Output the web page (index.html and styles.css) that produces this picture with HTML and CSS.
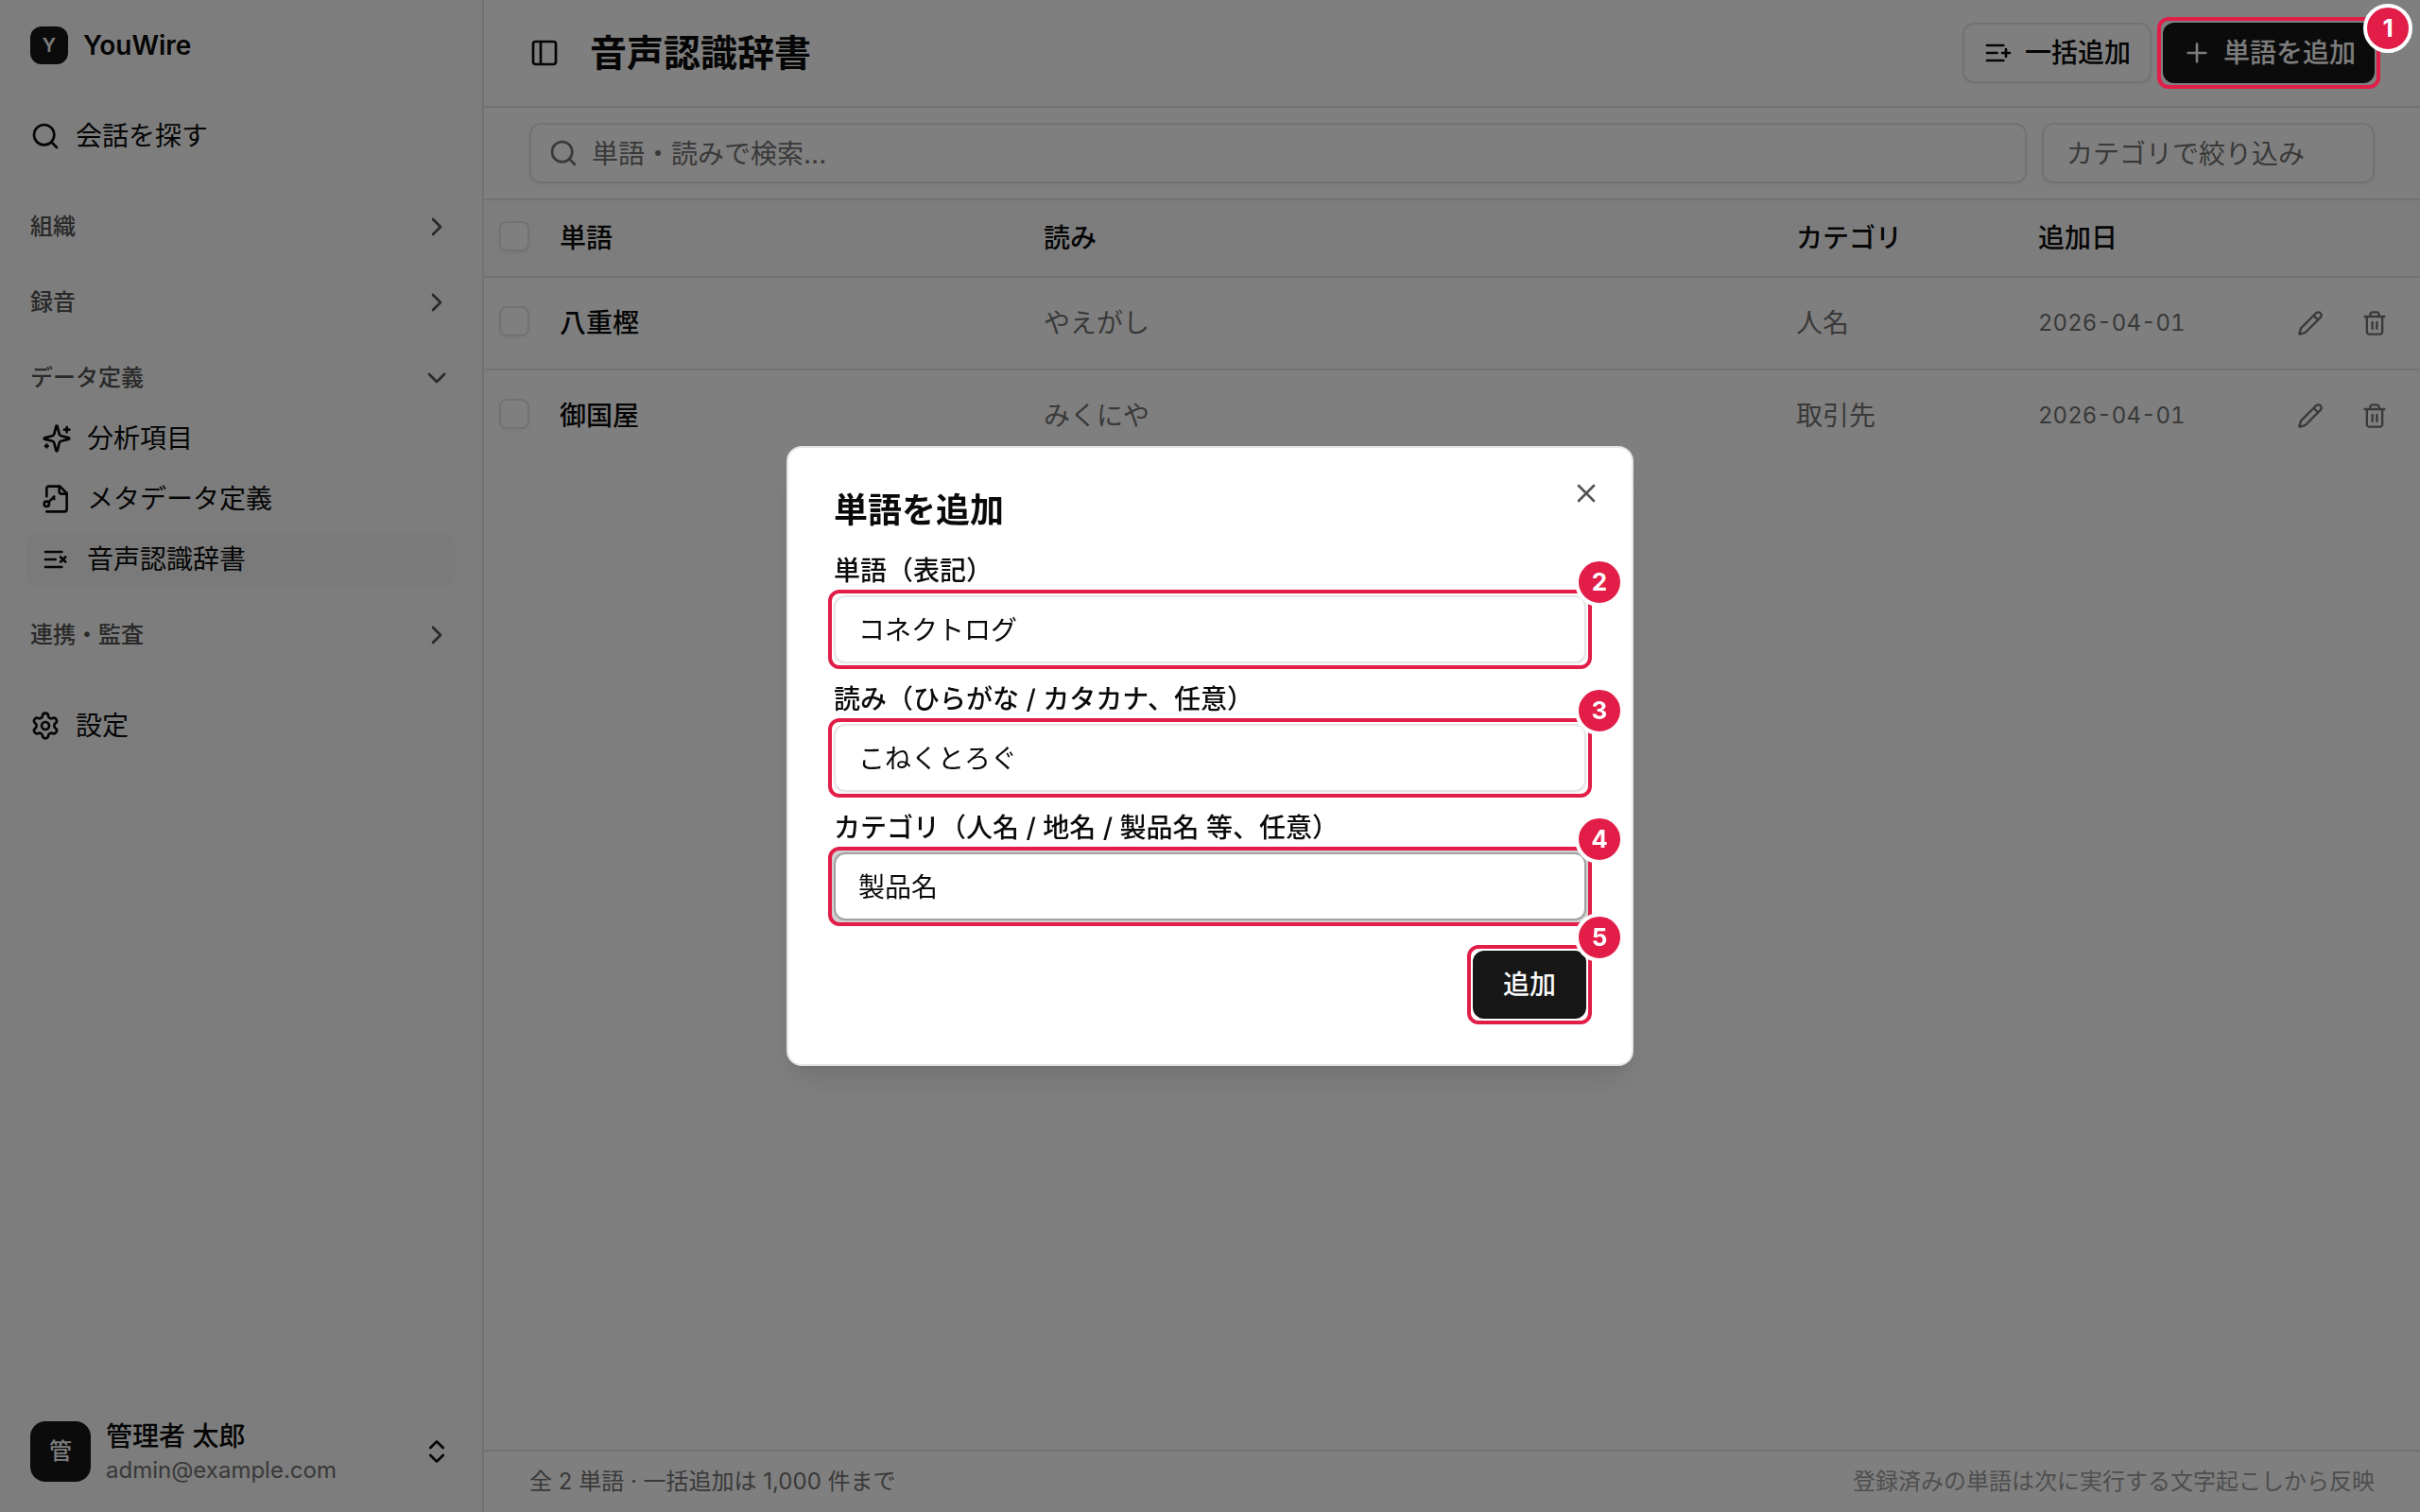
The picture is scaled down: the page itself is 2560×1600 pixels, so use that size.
FILE: index.html
```html
<!DOCTYPE html>
<html lang="ja">
<head>
    <meta charset="UTF-8">
    <meta name="viewport" content="width=device-width, initial-scale=1.0">
    <title>音声認識辞書 - YouWire</title>
    <link rel="stylesheet" href="styles.css">
</head>
<body>

    <div class="app">
        <aside class="sidebar">
            <div class="brand">
                <span class="brand-logo">Y</span>
                <span class="brand-name">YouWire</span>
            </div>

            <nav class="nav">
                <a class="nav-link" href="#search">
                    <svg class="icon" viewBox="0 0 24 24"><circle cx="11" cy="11" r="8"/><path d="m21 21-4.3-4.3"/></svg>
                    会話を探す
                </a>

                <div class="nav-groups">
                    <button type="button" class="nav-group">
                        組織
                        <svg class="icon" viewBox="0 0 24 24"><path d="m9 18 6-6-6-6"/></svg>
                    </button>
                    <button type="button" class="nav-group">
                        録音
                        <svg class="icon" viewBox="0 0 24 24"><path d="m9 18 6-6-6-6"/></svg>
                    </button>
                    <div>
                        <button type="button" class="nav-group">
                            データ定義
                            <svg class="icon" viewBox="0 0 24 24"><path d="m6 9 6 6 6-6"/></svg>
                        </button>
                        <div class="nav-sub">
                            <a class="nav-item" href="#items">
                                <svg class="icon" viewBox="0 0 24 24"><path d="M9.937 15.5A2 2 0 0 0 8.5 14.063l-6.135-1.582a.5.5 0 0 1 0-.962L8.5 9.936A2 2 0 0 0 9.937 8.5l1.582-6.135a.5.5 0 0 1 .963 0L14.063 8.5A2 2 0 0 0 15.5 9.937l6.135 1.581a.5.5 0 0 1 0 .964L15.5 14.063a2 2 0 0 0-1.437 1.437l-1.582 6.135a.5.5 0 0 1-.963 0z"/><path d="M20 3v4M22 5h-4M4 17v2M5 18H3"/></svg>
                                分析項目
                            </a>
                            <a class="nav-item" href="#metadata">
                                <svg class="icon" viewBox="0 0 24 24"><path d="M4 10V4a2 2 0 0 1 2-2h8.5L20 7.5V20a2 2 0 0 1-2 2H4"/><path d="M14 2v4a2 2 0 0 0 2 2h4"/><circle cx="4" cy="16" r="2"/><path d="m10 10-4.5 4.5M9 11l1 1"/></svg>
                                メタデータ定義
                            </a>
                            <a class="nav-item active" href="#dictionary">
                                <svg class="icon" viewBox="0 0 24 24"><path d="M11 12H3M16 6H3M16 18H3M19 10l-4 4M15 10l4 4"/></svg>
                                音声認識辞書
                            </a>
                        </div>
                    </div>
                    <button type="button" class="nav-group">
                        連携・監査
                        <svg class="icon" viewBox="0 0 24 24"><path d="m9 18 6-6-6-6"/></svg>
                    </button>
                </div>

                <a class="nav-link" href="#settings">
                    <svg class="icon" viewBox="0 0 24 24"><path d="M9.671 4.136a2.34 2.34 0 0 1 4.659 0 2.34 2.34 0 0 0 3.319 1.915 2.34 2.34 0 0 1 2.33 4.033 2.34 2.34 0 0 0 0 3.831 2.34 2.34 0 0 1-2.33 4.033 2.34 2.34 0 0 0-3.319 1.915 2.34 2.34 0 0 1-4.659 0 2.34 2.34 0 0 0-3.32-1.915 2.34 2.34 0 0 1-2.33-4.033 2.34 2.34 0 0 0 0-3.831A2.34 2.34 0 0 1 6.35 6.051a2.34 2.34 0 0 0 3.319-1.915"/><circle cx="12" cy="12" r="3"/></svg>
                    設定
                </a>
            </nav>

            <button type="button" class="user">
                <span class="avatar">管</span>
                <span class="user-info">
                    <span class="user-name">管理者 太郎</span>
                    <span class="user-mail">admin@example.com</span>
                </span>
                <svg class="icon" viewBox="0 0 24 24"><path d="m7 15 5 5 5-5M7 9l5-5 5 5"/></svg>
            </button>
        </aside>

        <main class="main">
            <header class="header">
                <button type="button" class="icon-button" aria-label="サイドバー">
                    <svg class="icon" viewBox="0 0 24 24"><rect width="18" height="18" x="3" y="3" rx="2"/><path d="M9 3v18"/></svg>
                </button>
                <h1>音声認識辞書</h1>
                <div class="header-actions">
                    <button type="button" class="button outline">
                        <svg class="icon" viewBox="0 0 24 24"><path d="M11 12H3M16 6H3M16 18H3M18 9v6M21 12h-6"/></svg>
                        一括追加
                    </button>
                    <div class="mark mark-edge">
                        <button type="button" class="button primary">
                            <svg class="icon" viewBox="0 0 24 24"><path d="M5 12h14M12 5v14"/></svg>
                            単語を追加
                        </button>
                        <span class="mark-number">1</span>
                    </div>
                </div>
            </header>

            <div class="filters">
                <div class="search">
                    <svg class="icon" viewBox="0 0 24 24"><circle cx="11" cy="11" r="8"/><path d="m21 21-4.3-4.3"/></svg>
                    <input type="text" class="input" placeholder="単語・読みで検索..." aria-label="単語・読みで検索">
                </div>
                <input type="text" class="input category" placeholder="カテゴリで絞り込み" aria-label="カテゴリで絞り込み">
            </div>

            <div class="table-wrap">
                <table>
                    <colgroup>
                        <col class="col-check">
                        <col class="col-word">
                        <col>
                        <col class="col-category">
                        <col class="col-date">
                        <col class="col-actions">
                    </colgroup>
                    <thead>
                        <tr>
                            <th><input type="checkbox" aria-label="すべて選択"></th>
                            <th>単語</th>
                            <th>読み</th>
                            <th>カテゴリ</th>
                            <th>追加日</th>
                            <th></th>
                        </tr>
                    </thead>
                    <tbody>
                        <tr>
                            <td><input type="checkbox" aria-label="八重樫を選択"></td>
                            <td class="word">八重樫</td>
                            <td>やえがし</td>
                            <td>人名</td>
                            <td class="date">2026-04-01</td>
                            <td>
                                <div class="row-actions">
                                    <button type="button" class="icon-button" aria-label="編集"><svg class="icon small" viewBox="0 0 24 24"><path d="M21.174 6.812a1 1 0 0 0-3.986-3.987L3.842 16.174a2 2 0 0 0-.5.83l-1.321 4.352a.5.5 0 0 0 .623.622l4.353-1.32a2 2 0 0 0 .83-.497zM15 5l4 4"/></svg></button>
                                    <button type="button" class="icon-button" aria-label="削除"><svg class="icon small" viewBox="0 0 24 24"><path d="M3 6h18M19 6v14c0 1-1 2-2 2H7c-1 0-2-1-2-2V6M8 6V4c0-1 1-2 2-2h4c1 0 2 1 2 2v2M10 11v6M14 11v6"/></svg></button>
                                </div>
                            </td>
                        </tr>
                        <tr>
                            <td><input type="checkbox" aria-label="御国屋を選択"></td>
                            <td class="word">御国屋</td>
                            <td>みくにや</td>
                            <td>取引先</td>
                            <td class="date">2026-04-01</td>
                            <td>
                                <div class="row-actions">
                                    <button type="button" class="icon-button" aria-label="編集"><svg class="icon small" viewBox="0 0 24 24"><path d="M21.174 6.812a1 1 0 0 0-3.986-3.987L3.842 16.174a2 2 0 0 0-.5.83l-1.321 4.352a.5.5 0 0 0 .623.622l4.353-1.32a2 2 0 0 0 .83-.497zM15 5l4 4"/></svg></button>
                                    <button type="button" class="icon-button" aria-label="削除"><svg class="icon small" viewBox="0 0 24 24"><path d="M3 6h18M19 6v14c0 1-1 2-2 2H7c-1 0-2-1-2-2V6M8 6V4c0-1 1-2 2-2h4c1 0 2 1 2 2v2M10 11v6M14 11v6"/></svg></button>
                                </div>
                            </td>
                        </tr>
                    </tbody>
                </table>
            </div>

            <footer class="footer">
                <span>全 2 単語 · 一括追加は 1,000 件まで</span>
                <span class="footer-note">登録済みの単語は次に実行する文字起こしから反映</span>
            </footer>
        </main>
    </div>

    <div class="overlay">
        <form class="dialog" role="dialog" aria-labelledby="dialogTitle">
            <button type="button" class="dialog-close" aria-label="閉じる">
                <svg class="icon" viewBox="0 0 24 24"><path d="M18 6 6 18M6 6l12 12"/></svg>
            </button>
            <h2 id="dialogTitle">単語を追加</h2>
            <div class="fields">
                <div class="field">
                    <label for="word">単語（表記）</label>
                    <div class="mark">
                        <input type="text" class="input large" id="word" value="コネクトログ">
                        <span class="mark-number">2</span>
                    </div>
                </div>
                <div class="field">
                    <label for="reading">読み（ひらがな / カタカナ、任意）</label>
                    <div class="mark">
                        <input type="text" class="input large" id="reading" value="こねくとろぐ">
                        <span class="mark-number">3</span>
                    </div>
                </div>
                <div class="field">
                    <label for="category">カテゴリ（人名 / 地名 / 製品名 等、任意）</label>
                    <div class="mark">
                        <input type="text" class="input large focused" id="category" value="製品名">
                        <span class="mark-number">4</span>
                    </div>
                </div>
            </div>
            <div class="dialog-footer">
                <div class="mark">
                    <button type="button" class="button primary large">追加</button>
                    <span class="mark-number">5</span>
                </div>
            </div>
        </form>
    </div>

</body>
</html>
```
FILE: styles.css
```css
* {
    box-sizing: border-box;
}

body {
    margin: 0;
    color: #0a0a0a;
    background: #fff;
    font-family: Inter, "Noto Sans CJK JP", sans-serif;
    font-size: 28px;
    line-height: 40px;
}

button,
input {
    margin: 0;
    font: inherit;
    color: inherit;
}

button {
    padding: 0;
    border: 0;
    background: none;
    cursor: pointer;
}

a {
    color: inherit;
    text-decoration: none;
}

h1,
h2 {
    margin: 0;
}

.icon {
    width: 32px;
    height: 32px;
    flex: none;
    fill: none;
    stroke: currentColor;
    stroke-width: 2;
    stroke-linecap: round;
    stroke-linejoin: round;
}

.icon.small {
    width: 28px;
    height: 28px;
}

.app {
    display: flex;
    min-height: 100vh;
}

/* sidebar */

.sidebar {
    display: flex;
    flex-direction: column;
    width: 512px;
    flex: none;
    background: #fafafa;
    border-right: 2px solid #e5e5e5;
}

.brand {
    display: flex;
    align-items: center;
    gap: 16px;
    height: 96px;
    padding: 0 32px;
}

.brand-logo {
    display: flex;
    align-items: center;
    justify-content: center;
    width: 40px;
    height: 40px;
    border-radius: 12px;
    background: #171717;
    color: #fafafa;
    font-size: 20px;
    font-weight: 600;
}

.brand-name {
    font-weight: 600;
}

.nav {
    display: flex;
    flex-direction: column;
    flex: 1;
    gap: 32px;
    padding: 16px 28px;
}

.nav-link {
    display: flex;
    align-items: center;
    gap: 16px;
    height: 64px;
    padding: 0 4px;
}

.nav-groups {
    display: flex;
    flex-direction: column;
    gap: 16px;
}

.nav-group {
    display: flex;
    align-items: center;
    justify-content: space-between;
    width: 100%;
    height: 64px;
    padding: 0 4px;
    color: #525252;
    font-size: 24px;
    font-weight: 500;
}

.nav-sub {
    display: flex;
    flex-direction: column;
    gap: 8px;
    padding: 4px 0;
}

.nav-item {
    display: flex;
    align-items: center;
    gap: 16px;
    height: 56px;
    padding: 0 16px;
    border-radius: 12px;
}

.nav-item.active {
    background: #f5f5f5;
}

.user {
    display: flex;
    align-items: center;
    gap: 16px;
    padding: 26px 32px;
    text-align: left;
}

.avatar {
    display: flex;
    align-items: center;
    justify-content: center;
    width: 64px;
    height: 64px;
    border-radius: 16px;
    background: #171717;
    color: #fafafa;
    font-size: 24px;
    font-weight: 500;
}

.user-info {
    display: flex;
    flex-direction: column;
    flex: 1;
    padding-top: 4px;
    line-height: 36px;
}

.user-name {
    font-weight: 500;
}

.user-mail {
    color: #737373;
    font-size: 24px;
}

/* main area */

.main {
    display: flex;
    flex-direction: column;
    flex: 1;
    min-width: 0;
}

.header {
    display: flex;
    align-items: center;
    gap: 16px;
    padding: 24px 48px 24px 32px;
    border-bottom: 2px solid #e5e5e5;
}

.header h1 {
    flex: 1;
    font-size: 39px;
    font-weight: 600;
    line-height: 56px;
}

.header-actions {
    display: flex;
    gap: 12px;
}

.icon-button {
    display: flex;
    align-items: center;
    justify-content: center;
    width: 64px;
    height: 64px;
}

.button {
    display: flex;
    align-items: center;
    gap: 12px;
    height: 64px;
    padding: 0 20px;
    border-radius: 12px;
    font-weight: 500;
    white-space: nowrap;
}

.button.outline {
    border: 2px solid #e5e5e5;
    background: #fff;
    box-shadow: 0 2px 4px rgba(0, 0, 0, 0.05);
}

.button.primary {
    background: #171717;
    color: #fafafa;
}

.button.large {
    height: 72px;
    padding: 0 32px;
}

.input {
    display: block;
    width: 100%;
    height: 64px;
    padding: 2px 24px 0;
    border: 2px solid #e5e5e5;
    border-radius: 12px;
    background: #fff;
    box-shadow: 0 2px 4px rgba(0, 0, 0, 0.05);
    outline: none;
}

.input::placeholder {
    color: #737373;
    opacity: 1;
}

.input.large {
    height: 72px;
    padding: 0 24px 2px;
}

.input.focused {
    border-color: #a1a1a1;
    box-shadow: 0 0 0 6px #d0d0d0;
}

.filters {
    display: flex;
    gap: 16px;
    padding: 16px 48px;
    border-bottom: 2px solid #e5e5e5;
}

.search {
    position: relative;
    flex: 1;
}

.search .icon {
    position: absolute;
    top: 16px;
    left: 20px;
    color: #737373;
}

.search .input {
    padding-left: 64px;
}

.category {
    width: 352px;
}

.table-wrap {
    flex: 1;
}

table {
    width: 100%;
    table-layout: fixed;
    border-collapse: separate;
    border-spacing: 0;
}

.col-check {
    width: 64px;
}

.col-word {
    width: 512px;
}

.col-category,
.col-date {
    width: 256px;
}

.col-actions {
    width: 164px;
}

th,
td {
    padding: 16px;
    border-bottom: 2px solid #e5e5e5;
    text-align: left;
    vertical-align: middle;
}

th {
    height: 82px;
    padding: 0 16px;
    background: #fafafa;
    font-weight: 500;
}

td {
    color: #737373;
}

tbody tr:last-child td {
    border-bottom: 0;
}

td.word {
    color: #0a0a0a;
    font-weight: 500;
}

td.date {
    font-size: 24px;
    font-variant-numeric: tabular-nums;
}

input[type="checkbox"] {
    display: block;
    appearance: none;
    width: 32px;
    height: 32px;
    margin-bottom: 4px;
    border: 2px solid #e5e5e5;
    border-radius: 8px;
    background: #fff;
    box-shadow: 0 2px 4px rgba(0, 0, 0, 0.05);
}

.row-actions {
    display: flex;
    gap: 4px;
}

.footer {
    display: flex;
    justify-content: space-between;
    padding: 16px 48px;
    border-top: 2px solid #e5e5e5;
    color: #737373;
    font-size: 24px;
    line-height: 32px;
}

.footer-note {
    color: #9d9d9d;
}

/* dialog */

.overlay {
    position: fixed;
    inset: 0;
    z-index: 10;
    display: flex;
    align-items: center;
    justify-content: center;
    background: rgba(0, 0, 0, 0.5);
}

.dialog {
    position: relative;
    display: flex;
    flex-direction: column;
    gap: 32px;
    width: 896px;
    max-width: calc(100% - 64px);
    padding: 48px;
    border: 2px solid #e5e5e5;
    border-radius: 16px;
    background: #fff;
    box-shadow: 0 20px 30px -6px rgba(0, 0, 0, 0.1), 0 8px 12px -8px rgba(0, 0, 0, 0.1);
}

.dialog h2 {
    font-size: 36px;
    font-weight: 600;
    line-height: 36px;
}

.dialog-close {
    position: absolute;
    top: 32px;
    right: 32px;
    display: flex;
    color: #545454;
}

.fields {
    display: flex;
    flex-direction: column;
    gap: 24px;
}

.field {
    display: flex;
    flex-direction: column;
    gap: 12px;
}

.field label {
    font-weight: 500;
    line-height: 28px;
}

.dialog-footer {
    display: flex;
    justify-content: flex-end;
}

/* numbered red marks around the controls to use */

.mark {
    position: relative;
}

.mark::after {
    content: "";
    position: absolute;
    inset: -6px;
    z-index: 20;
    border: 4px solid #e11d48;
    border-radius: 12px;
    pointer-events: none;
}

.mark-number {
    position: absolute;
    top: -40px;
    right: -40px;
    z-index: 21;
    width: 52px;
    height: 52px;
    border: 4px solid #fff;
    border-radius: 50%;
    background: #e11d48;
    color: #fff;
    font-size: 26px;
    font-weight: 700;
    line-height: 44px;
    text-align: center;
}

.mark-edge .mark-number {
    top: -20px;
}
```
